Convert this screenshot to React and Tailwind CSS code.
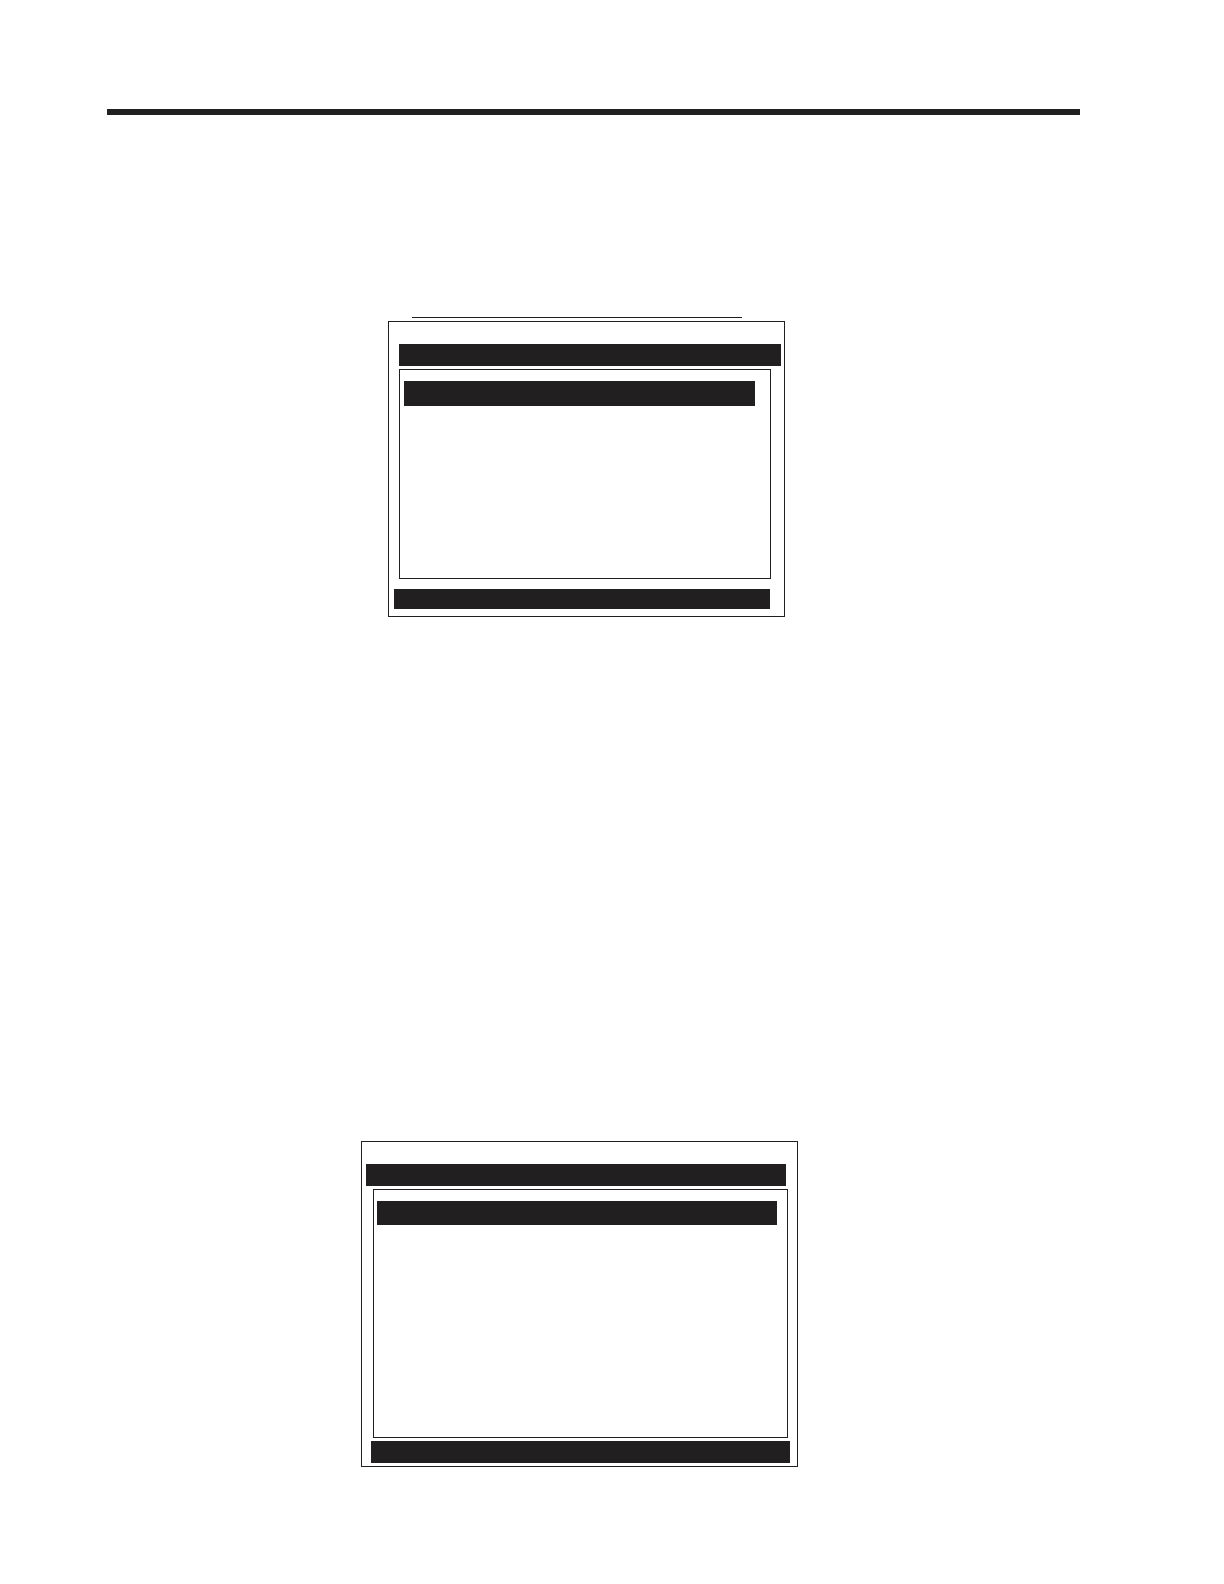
import React from 'react'

const screens = [
  {
    id: 'upper',
    overline: true,
    figure: 'ml-[281px] w-[397px]',
    frame: 'pb-[7px]',
    title: 'ml-[10px] mr-[3px]',
    list: 'ml-[10px] mr-[13px] h-[210px] pl-1 pr-[15px]',
    row: 'h-[25px]',
    status: 'mt-[10px] ml-[5px] mr-[14px] h-5',
  },
  {
    id: 'lower',
    overline: false,
    figure: 'ml-[254px] w-[437px]',
    frame: 'pb-[3px]',
    title: 'ml-1 mr-[11px]',
    list: 'ml-[11px] mr-[9px] h-[249px] pl-[3px] pr-[10px]',
    row: 'h-6',
    status: 'mt-[3px] ml-[9px] mr-[7px] h-[22px]',
  },
]

function Screen({ screen }) {
  return (
    <figure className={`flex flex-col max-w-full ${screen.figure}`}>
      {screen.overline && <div className="ml-6 mr-[43px] mb-[3px] h-px bg-[#231f20]" />}
      <div className={`flex flex-col border border-[#231f20] pt-[22px] ${screen.frame}`}>
        <div className={`h-[22px] bg-[#211f20] ${screen.title}`} />
        <div className={`mt-[3px] border border-[#231f20] pt-[11px] ${screen.list}`}>
          <div className={`bg-[#211f20] ${screen.row}`} />
        </div>
        <div className={`bg-[#211f20] ${screen.status}`} />
      </div>
    </figure>
  )
}

export default function App() {
  return (
    <main className="min-h-screen bg-white pt-[109px] pr-36 pb-[117px] pl-[107px]">
      <hr className="h-[6px] border-0 bg-[#211f20]" />
      <div className="flex flex-col gap-[524px] pt-[202px]">
        {screens.map(s => (
          <Screen key={s.id} screen={s} />
        ))}
      </div>
    </main>
  )
}
